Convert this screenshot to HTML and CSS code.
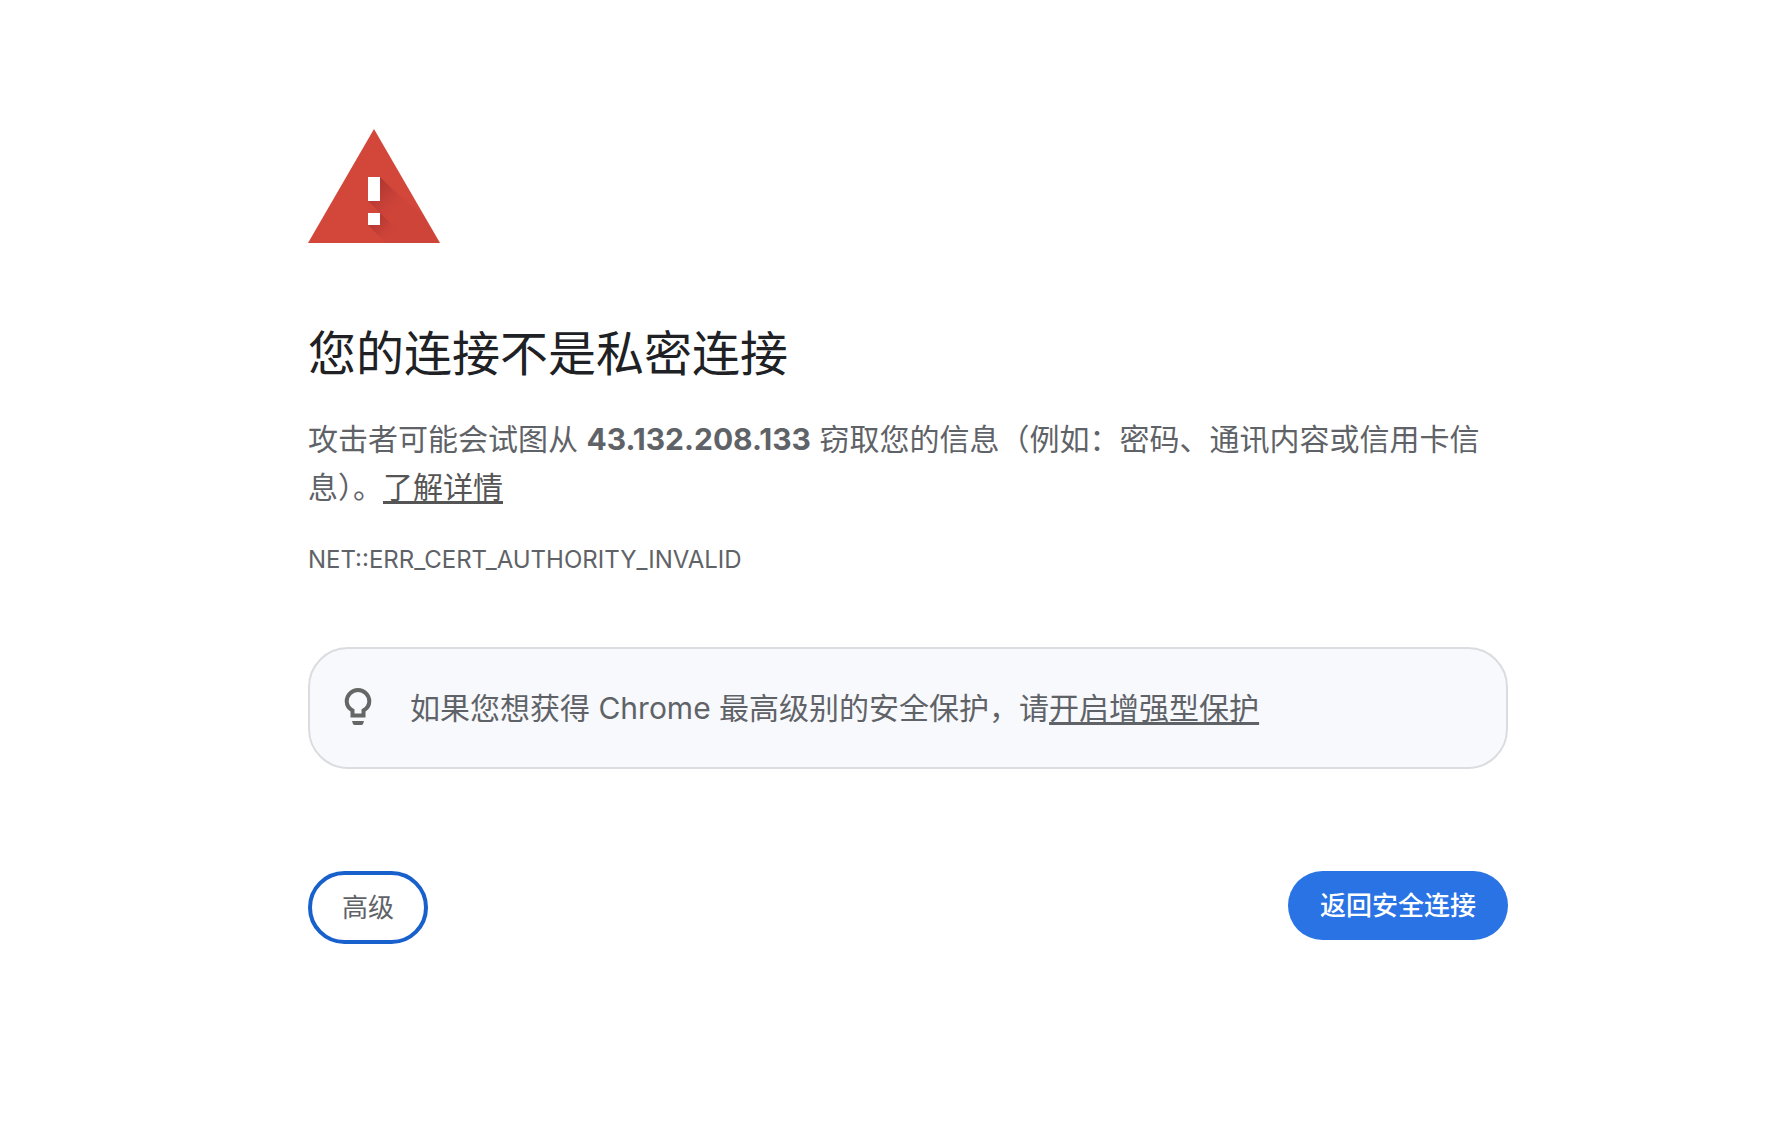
FILE: index.html
```html
<!DOCTYPE html>
<html lang="zh-CN">

<head>
    <meta charset="UTF-8">
    <meta name="viewport" content="width=device-width, initial-scale=1.0">
    <title>隐私设置错误</title>
    <link rel="stylesheet" href="styles.css">
</head>

<body>
    <main class="interstitial">
        <svg class="warning-icon" viewBox="0 0 132 114" aria-hidden="true">
            <defs>
                <linearGradient id="shadow-top" gradientUnits="userSpaceOnUse" x1="66" y1="54" x2="90" y2="78">
                    <stop offset="0" stop-color="#9c2f2c" stop-opacity="0.7" />
                    <stop offset="0.8" stop-color="#a83232" stop-opacity="0.1" />
                    <stop offset="1" stop-color="#a83232" stop-opacity="0" />
                </linearGradient>
                <linearGradient id="shadow-dot" gradientUnits="userSpaceOnUse" x1="66" y1="90" x2="84" y2="108">
                    <stop offset="0" stop-color="#9c2f2c" stop-opacity="0.6" />
                    <stop offset="0.7" stop-color="#a83232" stop-opacity="0.1" />
                    <stop offset="1" stop-color="#a83232" stop-opacity="0" />
                </linearGradient>
            </defs>
            <path d="M66 0 132 114H0z" fill="#d3473b" />
            <path d="M72 48 117 88 132 114H78L60 96V84h12L60 72z" fill="#b5332b" opacity="0.1" />
            <path d="M72 48 106 82 96 108 60 72z" fill="url(#shadow-top)" />
            <path d="M72 84 102 114H78L60 96z" fill="url(#shadow-dot)" />
            <path d="M60 48h12v24H60zM60 84h12v12H60z" fill="#fff" />
        </svg>

        <h1>您的连接不是私密连接</h1>
        <p class="message">攻击者可能会试图从 <strong>43.132.208.133</strong> 窃取您的信息（例如：密码、通讯内容或信用卡信息）。<a class="learn-more" href="#">了解详情</a></p>
        <p class="error-code">NET::ERR_CERT_AUTHORITY_INVALID</p>

        <div class="promo">
            <svg class="bulb-icon" viewBox="0 1 48 48" aria-hidden="true">
                <path d="M18.500 32.500V27.500C15 25.500 12.700 22.300 12.700 18.300a11.300 11.300 0 0 1 22.600 0C35.300 22.300 33 25.500 29.500 27.500V32.500z" fill="none" stroke="#666" stroke-width="4" />
                <path d="M18 38h12l-1 3q-.5 1-1.500 1h-7q-1 0-1.500-1z" fill="#666" />
            </svg>
            <p>如果您想获得 Chrome 最高级别的安全保护，请<a href="#">开启增强型保护</a></p>
        </div>

        <div class="buttons">
            <button type="button" class="secondary">高级</button>
            <button type="button" class="primary">返回安全连接</button>
        </div>
    </main>
</body>

</html>
```
FILE: styles.css
```css
body {
    margin: 0;
    padding: 0 0 0 38px;
    background-color: #fff;
    color: #5f6368;
    font-family: Inter, "Noto Sans CJK SC", sans-serif;
    font-size: 30px;
    line-height: 48px;
}

.interstitial {
    max-width: 1200px;
    margin: 0 auto;
    padding-top: 129px;
}

.warning-icon {
    display: block;
    width: 132px;
    height: 114px;
}

h1 {
    margin: 81px 0 31px;
    color: #202124;
    font-size: 48px;
    font-weight: 400;
    line-height: 60px;
}

p {
    margin: 0;
}

a {
    color: inherit;
    text-decoration: underline;
    text-decoration-thickness: 3px;
    text-decoration-skip-ink: none;
    text-underline-offset: 3px;
}

.learn-more {
    color: #555;
}

.error-code {
    margin-top: 25px;
    font-size: 24px;
}

.promo {
    display: flex;
    align-items: center;
    gap: 28px;
    margin-top: 63px;
    padding: 35px 24px;
    border: 2px solid #dadce0;
    border-radius: 40px;
    background-color: #f8f9fc;
}

.bulb-icon {
    flex: none;
    width: 48px;
    height: 48px;
}

.buttons {
    display: flex;
    justify-content: space-between;
    align-items: flex-start;
    margin-top: 102px;
}

button {
    border: 0;
    border-radius: 40px;
    font-family: inherit;
    font-size: 26px;
    line-height: 37px;
    cursor: pointer;
}

.primary {
    padding: 16px 32px;
    background-color: #2973e4;
    color: #fff;
    font-weight: 500;
}

.secondary {
    padding: 14px 30px;
    border: 4px solid #1860cb;
    background-color: #fff;
    color: #5f6368;
}
```
